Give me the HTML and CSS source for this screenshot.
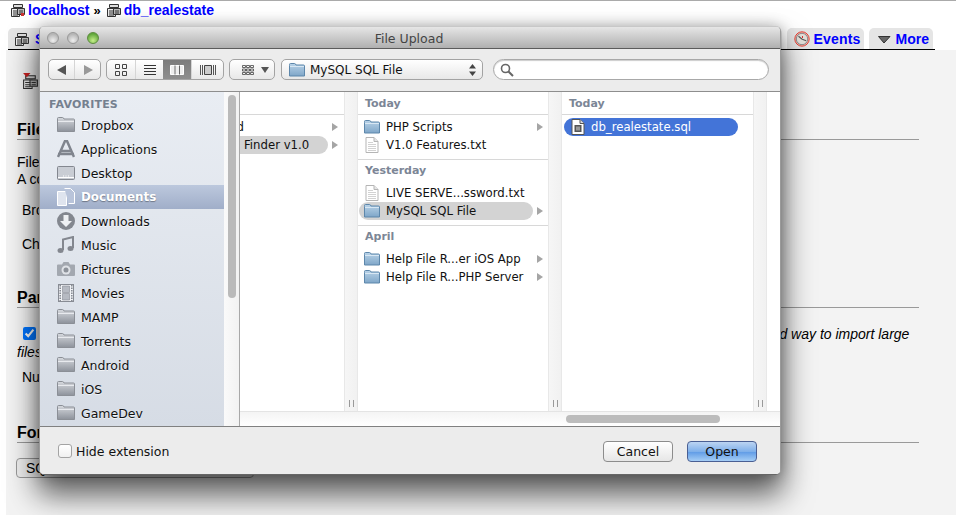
FILE: index.html
```html
<!DOCTYPE html>
<html lang="en">
<head>
<meta charset="utf-8">
<title>File Upload</title>
<link rel="stylesheet" href="styles.css">
</head>
<body>
<svg class="defs" aria-hidden="true">
  <defs>
    <linearGradient id="gf" x1="0" y1="0" x2="0" y2="1"><stop offset="0" stop-color="#d6d9de"/><stop offset="1" stop-color="#8d929b"/></linearGradient>
    <linearGradient id="bf" x1="0" y1="0" x2="0" y2="1"><stop offset="0" stop-color="#b9d3e8"/><stop offset="1" stop-color="#7fa6c8"/></linearGradient>
    <symbol id="grayfolder" viewBox="0 0 18 16"><path d="M.5 3V1.5Q.5.5 1.5.5h4q1 0 1.5 1.5h9.500q1 0 1 1v11.500h-17z" fill="url(#gf)" stroke="#8b8f96"/><path d="M1 4.500h16" stroke="#e8eaee"/></symbol>
    <symbol id="bluefolder" viewBox="0 0 16 14"><path d="M.5 2.500v-1q0-1 1-1h4q1 0 1.500 1.500h7.500q1 0 1 1v10h-15z" fill="url(#bf)" stroke="#5d87ab"/><path d="M1 3.500h14" stroke="#d8e7f3"/></symbol>
    <symbol id="doc" viewBox="0 0 13 16"><path d="M.5.5h8l4 4v11H.5z" fill="#fff" stroke="#b5b5b5"/><path d="M8.500.5v4h4" fill="#e6e6e6" stroke="#b5b5b5"/><path d="M2.500 5.500h5M2.500 7.500h8M2.500 9.500h8M2.500 11.500h8M2.500 13.500h8" stroke="#d2d2d2"/></symbol>
    <symbol id="sqldoc" viewBox="0 0 13 16"><path d="M.5.5h8l4 4v11H.5z" fill="#fff" stroke="#555"/><path d="M8.500.5v4h4" fill="#ddd" stroke="#555"/><rect x="3" y="6" width="7" height="7" fill="#555"/><rect x="4.500" y="7.500" width="4" height="4" fill="#999"/></symbol>
    <symbol id="dbicon" viewBox="0 0 16 16"><path d="M3.500 2.500h9v3h-9z" fill="#ddd" stroke="#333"/><path d="M1.500 6.500h8v8h-8z" fill="#eee" stroke="#333"/><path d="M7.500 6.500h7v6h-7z" fill="#bbb" stroke="#333"/><path d="M3 9h5M3 11h5M3 13h5M9 9h4M9 11h4" stroke="#333"/></symbol>
  </defs>
</svg>

<header class="crumbs">
  <svg class="crumb-icon" viewBox="0 0 16 16"><use href="#dbicon"/><rect x="11" y="11" width="3" height="3" fill="#c33"/></svg>
  <a class="link">localhost</a><span class="sep">»</span>
  <svg class="crumb-icon second" viewBox="0 0 16 16"><use href="#dbicon"/></svg>
  <a class="link">db_realestate</a>
</header>

<nav class="tabs">
  <div class="tab-group">
    <a class="tab link"><svg class="tab-icon" viewBox="0 0 16 16"><use href="#dbicon"/></svg>Structure</a>
    <a class="tab link">SQL</a>
  </div>
  <div class="tab-group">
    <a class="tab link">Routines</a>
    <a class="tab link events"><svg class="tab-icon" viewBox="0 0 16 16"><circle cx="8" cy="8" r="7.200" fill="#f3b5ae" stroke="#e2483c"/><circle cx="8" cy="8" r="5.700" fill="#e4e1da" stroke="#8d8d8d"/><path d="M8.200 8.200L4.500 5.200M8.200 8.200l4 1.500" stroke="#555" stroke-width="1.100"/><path d="M8.500 5v2" stroke="#d33"/></svg>Events</a>
    <a class="tab link"><svg class="tab-icon" viewBox="0 0 16 16"><path d="M3.500 5.500h11.500L9 12z" fill="#666" stroke="#333"/></svg>More</a>
  </div>
</nav>

<main class="panel">
  <h1 class="page-title"><svg class="title-icon" viewBox="0 0 16 16"><use href="#dbicon"/><path d="M1 0h7L4.500 4z" fill="#c22"/></svg>Importing into the database</h1>
  <section class="group file-group">
    <h2 class="group-title">File to import:</h2>
    <p class="line first">File may be compressed (gzip, bzip2, zip) or uncompressed.<br>A compressed file's name must end in .[format].[compression].</p>
    <p class="line browse">Browse your computer:</p>
    <p class="line charset">Character set of the file:</p>
  </section>
  <section class="group partial-group">
    <h2 class="group-title">Partial import:</h2>
    <p class="line partial"><input class="tick" type="checkbox" checked> Allow the interruption of an import in case the script detects it is close to the PHP timeout limit. <i>(This might be a good way to import large files, however it can break transactions.)</i></p>
    <p class="line skip">Number of rows to skip, starting from the first row:</p>
  </section>
  <section class="group format-group">
    <h2 class="group-title">Format:</h2>
    <div class="fake-select">SQL</div>
  </section>
</main>

<div class="dialog">
  <div class="titlebar">
    <span class="light"></span><span class="light"></span><span class="light green"></span>
    <span class="dialog-title">File Upload</span>
  </div>
  <div class="toolbar">
    <div class="seg nav-seg">
      <span class="seg-btn"><svg class="tool" viewBox="0 0 12 12"><path d="M10 1v10L1 6z" fill="#555"/></svg></span>
      <span class="seg-btn"><svg class="tool" viewBox="0 0 12 12"><path d="M2 1v10l9-5z" fill="#999"/></svg></span>
    </div>
    <div class="seg view-seg">
      <span class="seg-btn"><svg class="tool" viewBox="0 0 12 12"><path d="M.5.5h4v4h-4zM7.500.5h4v4h-4zM.5 7.500h4v4h-4zM7.500 7.500h4v4h-4z" fill="none" stroke="#444"/></svg></span>
      <span class="seg-btn"><svg class="tool wide" viewBox="0 0 12 10"><path d="M0 .5h12M0 3.500h12M0 6.500h12M0 9.500h12" stroke="#333"/></svg></span>
      <span class="seg-btn active"><svg class="tool wide" viewBox="0 0 14 10"><path d="M.5.500h13v9H.5zM5 .5v9M9.500.5v9" fill="#eee" stroke="#fff"/><path d="M5 .5v9M9.500.5v9" stroke="#666"/></svg></span>
      <span class="seg-btn"><svg class="tool wider" viewBox="0 0 16 10"><path d="M.5 0v10M2.500 0v10M13.500 0v10M15.500 0v10" stroke="#555"/><path d="M4.500.5h7v9h-7z" fill="#ccc" stroke="#444"/></svg></span>
    </div>
    <div class="seg arrange">
      <svg class="tool wide" viewBox="0 0 12 10"><path d="M.5.500h3v2h-3zM4.500.500h3v2h-3zM8.500.500h3v2h-3zM.5 4h3v2h-3zM4.500 4h3v2h-3zM8.500 4h3v2h-3zM.5 7.500h3v2h-3zM4.500 7.500h3v2h-3zM8.500 7.500h3v2h-3z" fill="none" stroke="#444" stroke-width=".8"/></svg>
      <svg class="caret" viewBox="0 0 8 6"><path d="M0 0h8L4 6z" fill="#555"/></svg>
    </div>
    <div class="seg path-popup">
      <svg class="folder-icon" viewBox="0 0 16 14"><use href="#bluefolder"/></svg>
      <span class="path-label">MySQL SQL File</span>
      <svg class="updown" viewBox="0 0 7 12"><path d="M3.500 0L7 4.500H0zM3.500 12L0 7.500h7z" fill="#444"/></svg>
    </div>
    <div class="search"><svg class="lens" viewBox="0 0 14 14"><circle cx="5.500" cy="5.500" r="4" fill="none" stroke="#666" stroke-width="1.600"/><path d="M8.500 8.500L13 13" stroke="#666" stroke-width="2"/></svg></div>
  </div>

  <div class="browser">
    <aside class="sidebar">
      <div class="side-list">
        <div class="side-head">FAVORITES</div>
        <div class="side-row"><svg class="side-icon"><use href="#grayfolder"/></svg>Dropbox</div>
        <div class="side-row"><svg class="side-icon" viewBox="0 0 18 18"><path d="M1 17L8 1h2l7 16M4 11h10M1 14h16" fill="none" stroke="#80858e" stroke-width="2.500"/></svg>Applications</div>
        <div class="side-row"><svg class="side-icon" viewBox="0 0 18 16"><rect x=".5" y="1.500" width="17" height="13" rx="1" fill="#c9cdd4" stroke="#83878f"/><path d="M6 11h1M8.500 11h1M11 11h1" stroke="#fff"/><path d="M1 12.500h16" stroke="#fff"/></svg>Desktop</div>
        <div class="side-row selected"><svg class="side-icon" viewBox="0 0 18 18"><path d="M.5 3.500h9v14h-9z" fill="#dfe4ee" stroke="#fff"/><path d="M7.500.5h6l4 4v11h-6" fill="#b9c4da" stroke="#fff"/></svg>Documents</div>
        <div class="side-row"><svg class="side-icon" viewBox="0 0 18 18"><circle cx="9" cy="9" r="9" fill="#83878f"/><path d="M6.500 3h5v6H15l-6 6-6-6h3.500z" fill="#eef0f3"/></svg>Downloads</div>
        <div class="side-row"><svg class="side-icon" viewBox="0 0 18 18"><path d="M6 14V3.500L16 1v11" fill="none" stroke="#83878f" stroke-width="2"/><ellipse cx="3.500" cy="14.500" rx="3" ry="2.500" fill="#83878f"/><ellipse cx="13.500" cy="12.500" rx="3" ry="2.500" fill="#83878f"/></svg>Music</div>
        <div class="side-row"><svg class="side-icon" viewBox="0 0 18 16"><path d="M1 3.500h4l1.500-2.500h5L13 3.500h4q1 0 1 1V14q0 1-1 1H1q-1 0-1-1V4.500q0-1 1-1z" fill="#a3a8b0"/><circle cx="9" cy="9" r="4.500" fill="#dfe2e7"/><circle cx="9" cy="9" r="2.500" fill="#8d929a"/></svg>Pictures</div>
        <div class="side-row"><svg class="side-icon" viewBox="0 0 18 18"><rect x="1.500" y=".5" width="15" height="17" fill="#f1f3f6" stroke="#888c94"/><path d="M3.200 1v16M14.800 1v16" stroke="#888c94" stroke-width="1.600" stroke-dasharray="1.500 1"/><path d="M5.500 2h7v6.500h-7zM5.500 9.500h7V16h-7z" fill="#b6bac2" stroke="#888c94" stroke-width=".6"/></svg>Movies</div>
        <div class="side-row"><svg class="side-icon"><use href="#grayfolder"/></svg>MAMP</div>
        <div class="side-row"><svg class="side-icon"><use href="#grayfolder"/></svg>Torrents</div>
        <div class="side-row"><svg class="side-icon"><use href="#grayfolder"/></svg>Android</div>
        <div class="side-row"><svg class="side-icon"><use href="#grayfolder"/></svg>iOS</div>
        <div class="side-row"><svg class="side-icon"><use href="#grayfolder"/></svg>GameDev</div>
      </div>
      <div class="side-gutter"><span class="side-thumb"></span></div>
    </aside>
    <div class="columns-wrap">
      <div class="columns">
        <div class="col col-a">
          <div class="col-head"></div>
          <div class="row"><span class="item clipped">Android</span><span class="arrow"></span></div>
          <div class="row"><span class="item current finder">Finder v1.0</span><span class="arrow"></span></div>
        </div>
        <div class="gutter"><span class="grip"></span></div>
        <div class="col col-b">
          <div class="col-head">Today</div>
          <div class="row"><span class="item"><svg class="row-icon"><use href="#bluefolder"/></svg>PHP Scripts</span><span class="arrow"></span></div>
          <div class="row"><span class="item"><svg class="row-icon doc-icon"><use href="#doc"/></svg>V1.0 Features.txt</span></div>
          <div class="col-head sub">Yesterday</div>
          <div class="row"><span class="item"><svg class="row-icon doc-icon"><use href="#doc"/></svg>LIVE SERVE...ssword.txt</span></div>
          <div class="row"><span class="item current"><svg class="row-icon"><use href="#bluefolder"/></svg>MySQL SQL File</span><span class="arrow"></span></div>
          <div class="col-head sub">April</div>
          <div class="row"><span class="item"><svg class="row-icon"><use href="#bluefolder"/></svg>Help File R...er iOS App</span><span class="arrow"></span></div>
          <div class="row"><span class="item"><svg class="row-icon"><use href="#bluefolder"/></svg>Help File R...PHP Server</span><span class="arrow"></span></div>
        </div>
        <div class="gutter"><span class="grip"></span></div>
        <div class="col col-c">
          <div class="col-head">Today</div>
          <div class="row"><span class="item chosen"><svg class="row-icon doc-icon"><use href="#sqldoc"/></svg>db_realestate.sql</span></div>
        </div>
        <div class="gutter"><span class="grip"></span></div>
        <div class="col col-d"></div>
      </div>
      <div class="hscroll"><span class="hthumb"></span></div>
    </div>
  </div>

  <div class="footer">
    <span class="check-box"></span>
    <span class="check-label">Hide extension</span>
    <span class="btn cancel">Cancel</span>
    <span class="btn open">Open</span>
  </div>
</div>
</body>
</html>
```

FILE: styles.css
```css
* { box-sizing: border-box; }

html, body { margin: 0; height: 100%; overflow: hidden; }

body {
  position: relative;
  width: 956px;
  height: 515px;
  background: #fff;
  border-top: 1px solid #aaa;
  font-family: "Liberation Sans", Arial, sans-serif;
  font-size: 14px;
  color: #000;
}

.defs { position: absolute; width: 0; height: 0; }

.link { color: #00f; font-weight: 700; }

.crumbs {
  display: flex;
  align-items: center;
  height: 18px;
  padding-left: 10px;
  font-size: 14px;
}
.crumb-icon { width: 16px; height: 16px; margin-right: 2px; }
.crumb-icon.second { margin-left: 5px; }
.sep { margin-left: 4px; font-weight: 700; font-size: 13px; }

.tabs {
  display: flex;
  justify-content: space-between;
  width: 927px;
  height: 31px;
  margin: 0 0 0 8px;
  padding: 9px 2px 0 0;
  border-bottom: 1px solid #000;
}
.tab-group { display: flex; gap: 5px; }
.tab {
  display: flex;
  align-items: center;
  gap: 5px;
  height: 21px;
  padding: 0 4px 0 6px;
  background: #e5e5e5;
  border-radius: 5px 5px 0 0;
  white-space: nowrap;
}
.tab.events { padding: 0 3px 0 7px; gap: 3px; letter-spacing: .2px; }
.tab-icon { width: 16px; height: 16px; }

.panel {
  height: 465px;
  margin-left: 6px;
  padding: 22px 37px 0 11px;
  background: #f3f3f3;
}
.page-title { display: flex; align-items: center; gap: 4px; margin: 0; padding-left: 5px; height: 18px; font-size: 14px; font-weight: 700; }
.title-icon { width: 17px; height: 17px; }

.group-title {
  margin: 0;
  height: 18px;
  font-size: 16px;
  line-height: 18px;
  font-weight: 700;
  border-bottom: 1px solid #999;
  box-sizing: content-box;
}
.line { margin: 0; line-height: 17px; }
.file-group { padding-top: 31px; }
.first { margin-top: 14px; }
.browse { margin-top: 14px; padding-left: 5px; }
.charset { margin-top: 17px; padding-left: 5px; }
.partial-group { padding-top: 36px; }
.partial { margin-top: 17px; line-height: 18px; }
.tick { margin: 0 27px 0 6px; vertical-align: -1px; }
.skip { margin-top: 8px; padding-left: 5px; }
.format-group { padding-top: 38px; }
.fake-select {
  width: 238px;
  height: 20px;
  margin: 15px 0 0 -1px;
  padding: 1px 9px;
  border: 1px solid #999;
  border-radius: 4px;
  background: #eee;
}

/* the open sheet sits above the page */
.dialog {
  position: absolute;
  left: 39px;
  top: 25px;
  width: 742px;
  height: 449px;
  display: flex;
  flex-direction: column;
  background: #ececec;
  border: 1px solid #9a9a9a;
  border-top-color: #c8c8c8;
  border-bottom-color: #666;
  border-radius: 5px;
  box-shadow: 0 18px 30px 2px rgba(0, 0, 0, .62), 0 0 14px rgba(0, 0, 0, .25);
  font-family: "DejaVu Sans", Verdana, sans-serif;
  font-size: 12px;
  color: #111;
  overflow: hidden;
}

.titlebar {
  position: relative;
  display: flex;
  align-items: center;
  gap: 8px;
  flex: none;
  height: 20px;
  padding: 1px 0 0 7px;
  background: linear-gradient(#e6e6e6, #b0b0b0);
  border-bottom: 1px solid #5c5c5c;
  box-sizing: content-box;
}
.light {
  width: 12px;
  height: 12px;
  border-radius: 50%;
  background: radial-gradient(circle at 50% 75%, #eee, #b6b6b6 70%);
  border: 1px solid #999;
}
.light.green {
  background: radial-gradient(circle at 50% 75%, #c6ef8a, #5fa53a 75%);
  border-color: #5d8c3f;
}
.dialog-title {
  position: absolute;
  left: 0;
  right: 2px;
  text-align: center;
  color: #444;
  font-size: 12.500px;
}

.toolbar {
  display: flex;
  align-items: center;
  gap: 5px;
  flex: none;
  height: 43px;
  padding: 0 11px 1px 8px;
  background: #ececec;
  border-bottom: 1px solid #8e8e8e;
}
.seg {
  display: flex;
  align-items: center;
  height: 21px;
  background: linear-gradient(#fff, #e8e8e8);
  border: 1px solid #a3a3a3;
  border-radius: 5px;
  overflow: hidden;
}
.seg-btn {
  display: flex;
  align-items: center;
  justify-content: center;
  height: 100%;
  border-left: 1px solid #d5d5d5;
}
.seg-btn:first-child { border-left: 0; }
.nav-seg { width: 53px; }
.nav-seg .seg-btn { width: 26px; }
.view-seg { width: 118px; }
.view-seg .seg-btn { width: 28px; }
.view-seg .seg-btn:last-child { flex: 1; }
.seg-btn.active { background: linear-gradient(#7c7c7c, #8e8e8e); border-left: 0; }
.tool { width: 12px; height: 12px; }
.tool.wide { width: 14px; height: 10px; }
.tool.wider { width: 16px; height: 10px; }
.arrange { width: 46px; padding-left: 11px; gap: 6px; margin-left: 0; }
.caret { width: 8px; height: 6px; }
.path-popup { width: 202px; margin-left: 1px; padding: 0 6px 0 7px; gap: 5px; }
.folder-icon { width: 16px; height: 14px; }
.path-label { flex: 1; font-size: 12px; }
.updown { width: 7px; height: 12px; }
.search {
  display: flex;
  align-items: center;
  flex: 1;
  height: 21px;
  margin-left: 5px;
  padding-left: 6px;
  background: #fff;
  border: 1px solid #a8a8a8;
  border-radius: 11px;
  box-shadow: inset 0 1px 1px #ccc;
}
.lens { width: 14px; height: 14px; }

.browser { display: flex; flex: none; height: 335px; border-bottom: 1px solid #808080; }

.sidebar {
  display: flex;
  flex: none;
  width: 200px;
  border-right: 1px solid #a8a8a8;
}
.side-list {
  flex: none;
  width: 184px;
  overflow: hidden;
  background: linear-gradient(#e9edf3, #d6dce5);
}
.side-head {
  height: 21px;
  padding: 6px 0 0 9px;
  font-size: 11px;
  line-height: 13px;
  font-weight: 700;
  color: #75808f;
  letter-spacing: .2px;
}
.side-row {
  display: flex;
  align-items: center;
  height: 24px;
  padding-left: 17px;
  gap: 6px;
  font-size: 12.500px;
  color: #111;
  text-shadow: 0 1px 0 rgba(255, 255, 255, .7);
}
.side-row.selected {
  background: linear-gradient(#bcc8dd, #a0aec9);
  color: #fff;
  font-size: 11.900px;
  font-weight: 700;
  text-shadow: 0 1px 1px rgba(0, 0, 0, .35);
}
.side-icon { width: 18px; height: 18px; flex: none; }
.side-gutter { position: relative; flex: 1; background: linear-gradient(90deg, #fafafa, #f2f2f2); }
.side-thumb {
  position: absolute;
  left: 4px;
  top: 3px;
  width: 8px;
  height: 203px;
  border-radius: 4px;
  background: #bababa;
}

.columns-wrap { display: flex; flex: 1; flex-direction: column; min-width: 0; }
.columns { display: flex; flex: 1; min-height: 0; background: #fff; }
.col { flex: none; overflow: hidden; }
.col-a { width: 104px; }
.col-b { width: 190px; }
.col-c { width: 191px; }
.col-d { flex: 1; }
.gutter {
  display: flex;
  flex: none;
  align-items: flex-end;
  justify-content: center;
  width: 14px;
  padding-bottom: 4px;
  background: linear-gradient(90deg, #f6f6f6, #f1f1f1);
  border-left: 1px solid #e8e8e8;
  border-right: 1px solid #e8e8e8;
}
.grip { width: 5px; height: 7px; border-left: 1px solid #999; border-right: 1px solid #999; }

.col-head {
  height: 23px;
  padding: 5px 0 0 7px;
  margin-bottom: 3px;
  font-size: 11px;
  line-height: 14px;
  font-weight: 700;
  color: #7c8696;
  border-bottom: 1px solid #d8d8d8;
}
.col-head.sub {
  height: 25px;
  margin-top: 5px;
  margin-bottom: 0;
  border-top: 1px solid #d8d8d8;
  border-bottom: 0;
  padding-top: 4px;
}
.row { display: flex; align-items: center; height: 18px; padding-right: 4px; }
.item {
  display: flex;
  flex: none;
  align-items: center;
  gap: 6px;
  width: 174px;
  height: 18px;
  margin-left: 1px;
  padding-left: 5px;
  border-radius: 9px;
  white-space: nowrap;
  font-size: 11.700px;
}
.row-icon { width: 16px; height: 14px; flex: none; }
.doc-icon { height: 16px; }
.current { background: #d3d3d3; }
.chosen { margin-left: 2px; background: #4374d8; color: #fff; padding-left: 6px; gap: 5px; }
.arrow {
  width: 0;
  height: 0;
  margin-left: 4px;
  border-left: 6px solid #a5a5a5;
  border-top: 4px solid transparent;
  border-bottom: 4px solid transparent;
}
.col-a .item { width: 88px; margin-left: 0; padding-left: 4px; border-radius: 0 9px 9px 0; }
.col-a .clipped { justify-content: flex-end; padding: 0 84px 0 0; overflow: hidden; }
.col-a .arrow { margin-left: 4px; }

.hscroll { position: relative; flex: none; height: 15px; background: linear-gradient(#f4f4f4, #fff); border-top: 1px solid #e4e4e4; }
.hthumb { position: absolute; left: 326px; top: 3px; width: 154px; height: 8px; border-radius: 4px; background: #bcbcbc; }

.footer {
  display: flex;
  align-items: center;
  flex: 1;
  padding: 1px 23px 0 18px;
  background: #ececec;
}
.check-box {
  width: 14px;
  height: 14px;
  margin-right: 4px;
  background: linear-gradient(#fff, #f0f0f0);
  border: 1px solid #a3a3a3;
  border-radius: 3px;
}
.check-label { flex: 1; font-size: 12.500px; }
.btn {
  display: flex;
  align-items: center;
  justify-content: center;
  width: 70px;
  height: 21px;
  border-radius: 4px;
  font-size: 12.500px;
  color: #111;
}
.cancel { margin-right: 14px; background: linear-gradient(#fff, #e6e6e6); border: 1px solid #8c8c8c; }
.open { background: linear-gradient(#bcd4f2 0, #7fb0ea 50%, #5f9be6 52%, #a5cdf5 100%); border: 1px solid #4a5f93; }
```
